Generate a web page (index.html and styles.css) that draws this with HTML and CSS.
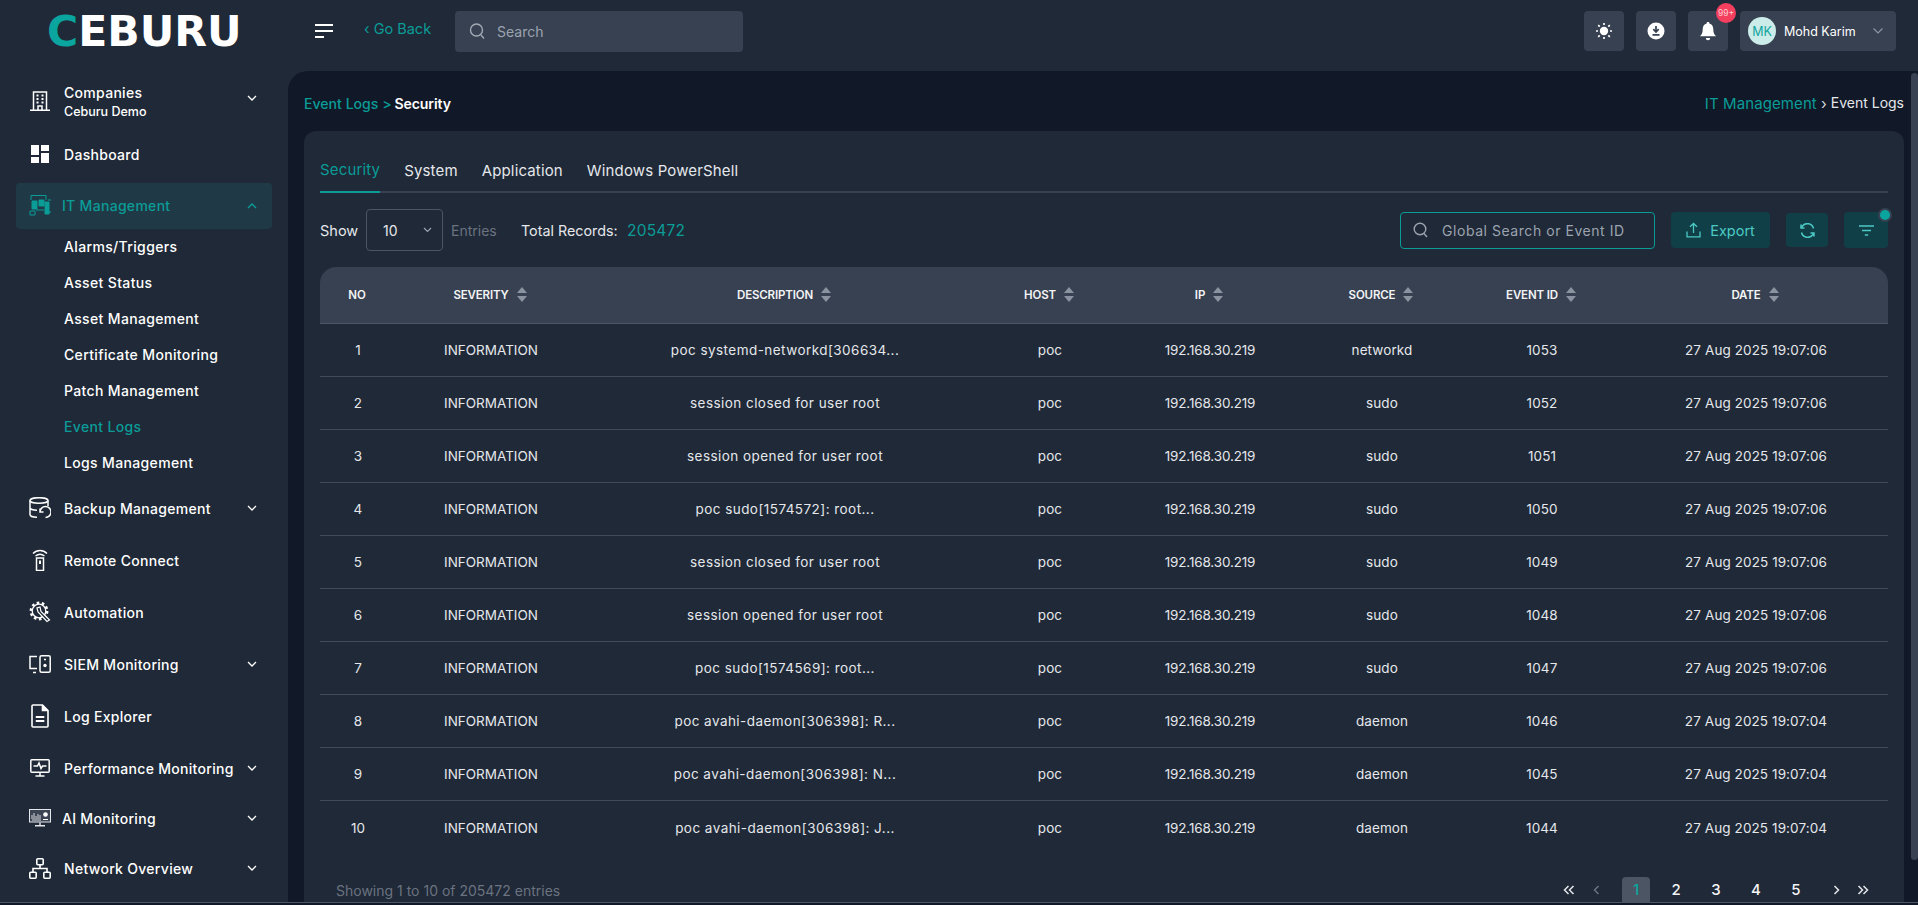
FILE: index.html
```html
<!DOCTYPE html>
<html lang="en">
<head>
<meta charset="utf-8">
<title>Event Logs - Security</title>
<link rel="stylesheet" href="styles.css">
</head>
<body>
<div class="app">
  <header class="topbar">
    <div class="brand"><span class="logo"><span class="logo-c">C</span>EBURU</span></div>
    <button class="burger" aria-label="Menu"><svg width="18" height="14" viewBox="0 0 18 14"><path d="M0 1h18M0 7h18M0 13h9" stroke="#fff" stroke-width="2"/></svg></button>
    <a class="goback">‹ Go Back</a>
    <div class="topsearch">
      <svg width="16" height="18" viewBox="0 0 16 18" fill="none" stroke="#a3aab5" stroke-width="1.4"><circle cx="7.5" cy="8" r="6"/><path d="M12 13l3 3.5"/></svg>
      <span>Search</span>
    </div>
    <div class="top-actions">
      <div class="tbtn"><svg width="16" height="16" viewBox="0 0 16 16"><circle cx="8" cy="8" r="4.2" fill="#fff"/><path d="M8 0v2M8 14v2M0 8h2M14 8h2M2.2 2.2l1.5 1.5M12.3 12.3l1.5 1.5M2.2 13.8l1.5-1.5M12.3 3.7l1.5-1.5" stroke="#fff" stroke-width="1.7"/></svg></div>
      <div class="tbtn"><svg width="18" height="18" viewBox="0 0 18 18"><circle cx="9" cy="9" r="8.5" fill="#fff"/><path d="M9 4v5M6.3 7.2L9 10l2.7-2.8M5.5 12.8h7" stroke="#374151" stroke-width="1.7" fill="none"/></svg></div>
      <div class="tbtn tbtn-bell"><svg width="16" height="19" viewBox="0 0 16 19"><path d="M8 0a1.3 1.3 0 011.3 1.6C12 2.3 13.3 4.6 13.3 7.3c0 3.6.7 5 2.7 7H0c2-2 2.7-3.4 2.7-7 0-2.7 1.3-5 4-5.7A1.3 1.3 0 018 0z" fill="#fff"/><path d="M5.8 16h4.4a2.2 2.2 0 01-4.4 0z" fill="#fff"/></svg><span class="badge">99+</span></div>
      <div class="user">
        <span class="avatar">MK</span>
        <span class="uname">Mohd Karim</span>
        <svg width="12" height="8" viewBox="0 0 12 8" fill="none" stroke="#8d95a3" stroke-width="1.2"><path d="M1.5 1.5L6 6l4.5-4.5"/></svg>
      </div>
    </div>
  </header>
  <div class="body">
    <nav class="sidebar">
      <a class="nav-row nav-company">
        <span class="ico"><svg width="20" height="20" viewBox="0 0 20 20" fill="none" stroke="#fff" stroke-width="1.5"><path d="M3.5 19.2V1h13v18.2M0 19.2h20M8 19v-4h4v4"/><path d="M6.5 4.500h2M11.500 4.500h2M6.500 8h2M11.500 8h2M6.500 11.500h2M11.500 11.500h2" stroke-width="2"/></svg></span>
        <span class="nav-text"><span class="nav-label">Companies</span><span class="nav-sub">Ceburu Demo</span></span>
        <svg class="chev" width="10" height="7" viewBox="0 0 10 7" fill="none" stroke="#fff" stroke-width="1.3"><path d="M1 1l4 4 4-4"/></svg>
      </a>
      <a class="nav-row">
        <span class="ico"><svg width="18" height="18" viewBox="0 0 18 18" fill="#fff"><path d="M0 0h8v10H0zM10 0h8v6h-8zM10 8h8v10h-8zM0 12h8v6H0z"/></svg></span>
        <span class="nav-label">Dashboard</span>
      </a>
      <a class="nav-row nav-active">
        <span class="ico"><svg width="22" height="22" viewBox="0 0 22 22" fill="none" stroke="#0b9c97" stroke-width="1"><path d="M2 6V1.5h15V6M19 6h3M19 18h3"/><path d="M3 7h5v8H3zM10 6h5v6h-5z" fill="#0b9c97"/><path d="M16 8h4v12h-4z" fill="#0b9c97"/><path d="M1 17h5v4H1zM7 16h8"/></svg></span>
        <span class="nav-label">IT Management</span>
        <svg class="chev" width="10" height="7" viewBox="0 0 10 7" fill="none" stroke="#0b9c97" stroke-width="1.3"><path d="M1 6l4-4 4 4"/></svg>
      </a>
      <ul class="subnav">
        <li>Alarms/Triggers</li>
        <li>Asset Status</li>
        <li>Asset Management</li>
        <li>Certificate Monitoring</li>
        <li>Patch Management</li>
        <li class="sub-active">Event Logs</li>
        <li>Logs Management</li>
      </ul>
      <a class="nav-row nav-backup">
        <span class="ico"><svg width="22" height="22" viewBox="0 0 22 22" fill="none" stroke="#fff" stroke-width="1.5"><ellipse cx="10" cy="3.5" rx="9" ry="2.8"/><path d="M1 3.5v14c0 1.5 3 2.8 7 2.8M19 3.5V9M1 10.5c0 1.500 3 2.800 7 2.800"/><path d="M11 15a5.5 5.5 0 115.5 5.5M11 11.5V15h3.500"/></svg></span>
        <span class="nav-label">Backup Management</span>
        <svg class="chev" width="10" height="7" viewBox="0 0 10 7" fill="none" stroke="#fff" stroke-width="1.3"><path d="M1 1l4 4 4-4"/></svg>
      </a>
      <a class="nav-row">
        <span class="ico"><svg width="16" height="22" viewBox="0 0 16 22" fill="none" stroke="#fff" stroke-width="1.4"><path d="M1 4.5C5 .5 11 .5 15 4.5M3.5 7c3-2.3 6-2.3 9 0"/><rect x="4.5" y="9" width="7" height="12.5" stroke-width="1.5"/><path d="M8 11.5v3.5" stroke-width="2"/></svg></span>
        <span class="nav-label">Remote Connect</span>
      </a>
      <a class="nav-row">
        <span class="ico"><svg width="22" height="22" viewBox="0 0 22 22" fill="none" stroke="#fff" stroke-width="1.5"><circle cx="10" cy="10" r="6.8" stroke-width="1.3"/><circle cx="10" cy="10" r="8.2" stroke-width="2.5" stroke-dasharray="2.6 2.55"/><path d="M8 7l1 4 9 9.5 2.5-1.5L12 10.5 11 6z" fill="#1f2937" stroke-width="1.2"/></svg></span>
        <span class="nav-label">Automation</span>
      </a>
      <a class="nav-row">
        <span class="ico"><svg width="22" height="19" viewBox="0 0 22 19" fill="none" stroke="#fff" stroke-width="1.5"><path d="M8 1.5H1v12h7M4 17.5h3"/><rect x="11" y=".8" width="10.2" height="16.5" rx="1.5"/><circle cx="16" cy="10.5" r="1.7" fill="#fff" stroke="none"/><path d="M15 4.5h2" stroke-width="1.6"/></svg></span>
        <span class="nav-label">SIEM Monitoring</span>
        <svg class="chev" width="10" height="7" viewBox="0 0 10 7" fill="none" stroke="#fff" stroke-width="1.3"><path d="M1 1l4 4 4-4"/></svg>
      </a>
      <a class="nav-row">
        <span class="ico"><svg width="18" height="24" viewBox="0 0 18 24" fill="none" stroke="#fff" stroke-width="1.6"><path d="M11.5 1H2a1 1 0 00-1 1v20a1 1 0 001 1h14a1 1 0 001-1V6.5z"/><path d="M11.5 1v5.5H17" fill="#fff"/><path d="M4.8 13h8.5M4.8 17h8.5" stroke-width="1.8"/></svg></span>
        <span class="nav-label">Log Explorer</span>
      </a>
      <a class="nav-row">
        <span class="ico"><svg width="20" height="18" viewBox="0 0 20 18" fill="none" stroke="#fff" stroke-width="1.5"><rect x=".8" y=".8" width="18.4" height="12.4" rx="1"/><path d="M3.5 7h4l1.5-3 2 5.5 1.5-2.5h4M10 13.5v3M5.5 17h9"/></svg></span>
        <span class="nav-label">Performance Monitoring</span>
        <svg class="chev" width="10" height="7" viewBox="0 0 10 7" fill="none" stroke="#fff" stroke-width="1.3"><path d="M1 1l4 4 4-4"/></svg>
      </a>
      <a class="nav-row nav-ai">
        <span class="ico"><svg width="22" height="18" viewBox="0 0 22 18" fill="none" stroke="#e5e7eb" stroke-width="1"><rect x=".5" y=".5" width="21" height="12.5" fill="#3b4454"/><path d="M3 10V6M5 10V4M7 10V7M9 10V5M11 10V6M3 11h9" stroke="#fff" stroke-width=".8"/><circle cx="16.5" cy="5.5" r="2.3" fill="#fff" stroke="none"/><path d="M14 10.5h5" stroke="#fff"/><path d="M11 13.5V16M6 16.8h10" stroke-width="1.4"/></svg></span>
        <span class="nav-label">AI Monitoring</span>
        <svg class="chev" width="10" height="7" viewBox="0 0 10 7" fill="none" stroke="#fff" stroke-width="1.3"><path d="M1 1l4 4 4-4"/></svg>
      </a>
      <a class="nav-row">
        <span class="ico"><svg width="22" height="21" viewBox="0 0 22 21" fill="none" stroke="#fff" stroke-width="1.6"><rect x="7.8" y=".8" width="6.4" height="6" rx="1"/><rect x=".8" y="14.2" width="6.4" height="6" rx="1"/><rect x="14.8" y="14.2" width="6.4" height="6" rx="1"/><path d="M11 7v3.5M4 14v-3.5h14V14"/></svg></span>
        <span class="nav-label">Network Overview</span>
        <svg class="chev" width="10" height="7" viewBox="0 0 10 7" fill="none" stroke="#fff" stroke-width="1.3"><path d="M1 1l4 4 4-4"/></svg>
      </a>
    </nav>
    <main class="main">
      <div class="content">
        <div class="crumbs">
          <div class="crumb-left"><span class="teal">Event Logs &gt;</span> <b>Security</b></div>
          <div class="crumb-right"><span class="teal">IT Management</span><span class="crumb-sep">›</span><span class="crumb-cur">Event Logs</span></div>
        </div>
        <section class="card">
          <div class="tabs">
            <a class="tab tab-active">Security</a>
            <a class="tab">System</a>
            <a class="tab">Application</a>
            <a class="tab">Windows PowerShell</a>
          </div>
          <div class="toolbar">
            <span class="show">Show</span>
            <div class="select"><span>10</span><svg width="9" height="6" viewBox="0 0 9 6" fill="none" stroke="#9ca3af" stroke-width="1.2"><path d="M1 1l3.5 3.5L8 1"/></svg></div>
            <span class="entries">Entries</span>
            <span class="total">Total Records:</span>
            <span class="total-num">205472</span>
            <div class="tools">
              <div class="gsearch">
                <svg width="15" height="16" viewBox="0 0 15 16" fill="none" stroke="#9ca3af" stroke-width="1.4"><circle cx="7" cy="7" r="5.8"/><path d="M11 11.5l3 3.5"/></svg>
                <span>Global Search or Event ID</span>
              </div>
              <div class="tool tool-export"><svg width="15" height="16" viewBox="0 0 15 16" fill="none" stroke="#4cc9c4" stroke-width="1.3"><path d="M7.5 11V1.5M4 4.8l3.5-3.3L11 4.8M1 9.5v5.3h13V9.5"/></svg><span>Export</span></div>
              <div class="tool tool-refresh"><svg width="15" height="15" viewBox="0 0 15 15" fill="none" stroke="#4cc9c4" stroke-width="1.5"><path d="M13.5 5.5A6.3 6.3 0 002.5 3L1 5M1.5 9.5A6.3 6.3 0 0012.5 12l1.5-2M1 1.5V5h3.5M14 13.5V10h-3.5"/></svg></div>
              <div class="tool tool-filter"><svg width="15" height="11" viewBox="0 0 15 11" fill="none" stroke="#4cc9c4" stroke-width="1.4"><path d="M0 1h15M3 5.5h9M5.8 10h3.4"/></svg><span class="dot"></span></div>
            </div>
          </div>
          <table class="grid">
            <colgroup>
              <col class="c-no"><col class="c-sev"><col class="c-desc"><col class="c-host"><col class="c-ip"><col class="c-src"><col class="c-id"><col class="c-date">
            </colgroup>
            <thead>
              <tr>
                <th>NO</th>
                <th>SEVERITY<span class="sort"></span></th>
                <th>DESCRIPTION<span class="sort"></span></th>
                <th>HOST<span class="sort"></span></th>
                <th>IP<span class="sort"></span></th>
                <th>SOURCE<span class="sort"></span></th>
                <th>EVENT ID<span class="sort"></span></th>
                <th>DATE<span class="sort"></span></th>
              </tr>
            </thead>
            <tbody>
              <tr><td>1</td><td class="sev">INFORMATION</td><td class="desc">poc systemd-networkd[306634...</td><td>poc</td><td class="ip">192.168.30.219</td><td>networkd</td><td>1053</td><td>27 Aug 2025 19:07:06</td></tr>
              <tr><td>2</td><td class="sev">INFORMATION</td><td class="desc">session closed for user root</td><td>poc</td><td class="ip">192.168.30.219</td><td>sudo</td><td>1052</td><td>27 Aug 2025 19:07:06</td></tr>
              <tr><td>3</td><td class="sev">INFORMATION</td><td class="desc">session opened for user root</td><td>poc</td><td class="ip">192.168.30.219</td><td>sudo</td><td>1051</td><td>27 Aug 2025 19:07:06</td></tr>
              <tr><td>4</td><td class="sev">INFORMATION</td><td class="desc">poc sudo[1574572]: root...</td><td>poc</td><td class="ip">192.168.30.219</td><td>sudo</td><td>1050</td><td>27 Aug 2025 19:07:06</td></tr>
              <tr><td>5</td><td class="sev">INFORMATION</td><td class="desc">session closed for user root</td><td>poc</td><td class="ip">192.168.30.219</td><td>sudo</td><td>1049</td><td>27 Aug 2025 19:07:06</td></tr>
              <tr><td>6</td><td class="sev">INFORMATION</td><td class="desc">session opened for user root</td><td>poc</td><td class="ip">192.168.30.219</td><td>sudo</td><td>1048</td><td>27 Aug 2025 19:07:06</td></tr>
              <tr><td>7</td><td class="sev">INFORMATION</td><td class="desc">poc sudo[1574569]: root...</td><td>poc</td><td class="ip">192.168.30.219</td><td>sudo</td><td>1047</td><td>27 Aug 2025 19:07:06</td></tr>
              <tr><td>8</td><td class="sev">INFORMATION</td><td class="desc">poc avahi-daemon[306398]: R...</td><td>poc</td><td class="ip">192.168.30.219</td><td>daemon</td><td>1046</td><td>27 Aug 2025 19:07:04</td></tr>
              <tr><td>9</td><td class="sev">INFORMATION</td><td class="desc">poc avahi-daemon[306398]: N...</td><td>poc</td><td class="ip">192.168.30.219</td><td>daemon</td><td>1045</td><td>27 Aug 2025 19:07:04</td></tr>
              <tr><td>10</td><td class="sev">INFORMATION</td><td class="desc">poc avahi-daemon[306398]: J...</td><td>poc</td><td class="ip">192.168.30.219</td><td>daemon</td><td>1044</td><td>27 Aug 2025 19:07:04</td></tr>
            </tbody>
          </table>
          <div class="tfoot">
            <span class="showing">Showing 1 to 10 of 205472 entries</span>
            <div class="pager">
              <span class="pg pg-icon"><svg width="12" height="10" viewBox="0 0 12 10" fill="none" stroke="#e5e7eb" stroke-width="1.5"><path d="M5.5 1L1.5 5l4 4M10.5 1l-4 4 4 4"/></svg></span>
              <span class="pg pg-icon"><svg width="7" height="10" viewBox="0 0 7 10" fill="none" stroke="#6b7280" stroke-width="1.5"><path d="M5.5 1L1.5 5l4 4"/></svg></span>
              <span class="pg pg-cur">1</span><span class="pg">2</span><span class="pg">3</span><span class="pg">4</span><span class="pg">5</span>
              <span class="pg"><svg width="7" height="10" viewBox="0 0 7 10" fill="none" stroke="#e5e7eb" stroke-width="1.5"><path d="M1.5 1l4 4-4 4"/></svg></span>
              <span class="pg pg-last"><svg width="12" height="10" viewBox="0 0 12 10" fill="none" stroke="#e5e7eb" stroke-width="1.5"><path d="M1.5 1l4 4-4 4M6.5 1l4 4-4 4"/></svg></span>
            </div>
          </div>
        </section>
      </div>
      <div class="scroll"></div>
    </main>
  </div>
  <div class="strip"></div>
</div>
</body>
</html>
```

FILE: styles.css
```css
* { box-sizing: border-box; }
html, body { margin: 0; height: 905px; overflow: hidden; }
body { font-family: Inter, "Noto Sans", "Liberation Sans", sans-serif; font-size: 14px; color: #e5e7eb; background: #1f2937; }
a { color: inherit; text-decoration: none; }
.teal { color: #0b9c97; }

.app { height: 905px; display: flex; flex-direction: column; }
.topbar { height: 71px; flex: none; display: flex; align-items: center; background: #1f2937; padding: 0 22px 9px 0; }
.brand { width: 315px; flex: none; padding-left: 47px; }
.logo { font-family: "DejaVu Sans", sans-serif; font-weight: 700; font-size: 43px; line-height: 1; color: #fff; display: inline-block; transform: scaleX(.99); transform-origin: left center; }
.logo-c { color: #0ba5a0; }
.burger { background: none; border: 0; padding: 0; width: 18px; height: 14px; display: block; flex: none; }
.burger svg { display: block; }
.goback { margin-left: 31px; color: #0b9c97; font-size: 14.5px; width: 91px; flex: none; position: relative; top: -3px; white-space: nowrap; }
.topsearch { width: 288px; height: 41px; background: #374151; border-radius: 4px; display: flex; align-items: center; gap: 12px; padding-left: 14px; color: #9ca3af; font-size: 14px; }
.top-actions { margin-left: auto; display: flex; gap: 12px; }
.tbtn { width: 40px; height: 40px; background: #374151; border-radius: 4px; display: flex; align-items: center; justify-content: center; position: relative; }
.badge { position: absolute; top: -8px; right: -8px; width: 20px; height: 20px; border-radius: 50%; background: #f43f5e; color: #fecdd3; font-size: 8.5px; display: flex; align-items: center; justify-content: center; }
.user { width: 156px; height: 40px; background: #374151; border-radius: 4px; display: flex; align-items: center; padding-left: 8px; }
.avatar { width: 28px; height: 28px; border-radius: 50%; background: #cbece8; color: #12a5a0; font-size: 12.5px; display: flex; align-items: center; justify-content: center; flex: none; }
.uname { margin-left: 8px; width: 88px; color: #fff; font-size: 12.5px; font-weight: 400; white-space: nowrap; }

.body { flex: 1; display: flex; min-height: 0; }
.sidebar { width: 288px; flex: none; padding: 4px 16px 0; background: #1f2937; }
.nav-row { height: 52px; display: flex; align-items: center; padding: 0 0 2px 12px; color: #fff; font-weight: 500; font-size: 14px; letter-spacing: .3px; position: relative; }
.ico { width: 24px; height: 24px; margin-right: 12px; flex: none; display: flex; align-items: center; justify-content: center; }
.chev { position: absolute; left: 231px; top: 50%; margin-top: -4px; }
.nav-company { height: 54px; }
.nav-text { display: flex; flex-direction: column; gap: 3px; }
.nav-sub { font-size: 12.5px; letter-spacing: 0; }
.nav-company .chev { margin-top: -7px; }
.nav-active { height: 46px; margin-top: 2px; background: #1f3a46; border-radius: 4px; color: #0b9c97; }
.nav-active .ico, .nav-ai .ico { margin-right: 10px; }
.subnav { list-style: none; margin: 0; padding: 0 0 0 48px; }
.subnav li { height: 36px; display: flex; align-items: center; padding-bottom: 2px; color: #fff; font-weight: 500; font-size: 14px; letter-spacing: .35px; }
.subnav .sub-active { color: #0b9c97; }
.nav-backup { margin-top: 2px; }
.nav-ai { height: 48px; }

.main { flex: 1; min-width: 0; display: flex; gap: 7px; background: #111827; border-top-left-radius: 20px; padding-left: 16px; overflow: hidden; }
.content { width: 1600px; flex: none; }
.crumbs { height: 60px; display: flex; justify-content: space-between; align-items: center; font-size: 14.1px; padding-top: 4px; }
.crumb-left { font-weight: 500; }
.crumb-left b { color: #fff; font-weight: 600; letter-spacing: -.1px; margin-left: -1px; }
.crumb-right { display: flex; gap: 4px; font-size: 15px; letter-spacing: .1px; }
.crumb-cur { font-size: 14px; letter-spacing: 0; line-height: 18px; }
.crumb-sep { color: #d1d5db; }
.scroll { width: 7px; height: 787px; margin-top: 2px; background: #374151; border-radius: 4px; flex: none; }

.card { background: #1f2937; border-radius: 12px 12px 0 0; padding: 16px 16px 0; height: 771px; overflow: hidden; }
.tabs { height: 46px; display: flex; gap: 24px; border-bottom: 2px solid #374151; }
.tab { height: 46px; display: flex; align-items: center; padding-top: 1px; font-size: 15px; color: #e5e7eb; white-space: nowrap; letter-spacing: .15px; }
.tab-active { color: #0b9c97; border-bottom: 2px solid #0b9c97; padding-bottom: 1px; }
.toolbar { height: 42px; margin-top: 16px; display: flex; align-items: center; }
.show { width: 46px; font-size: 14.5px; }
.select { width: 77px; height: 42px; border: 1px solid #4b5563; border-radius: 4px; display: flex; align-items: center; justify-content: space-between; padding: 0 10px 0 16px; font-size: 14px; }
.entries { margin-left: 8px; width: 70px; color: #6b7280; font-size: 14px; }
.total { width: 106px; font-size: 14.3px; font-weight: 400; white-space: nowrap; }
.total-num { color: #0b9c97; font-size: 15.5px; letter-spacing: .2px; }
.tools { margin-left: auto; display: flex; align-items: center; gap: 16px; }
.gsearch { width: 255px; height: 37px; border: 1px solid #0b9c97; border-radius: 4px; display: flex; align-items: center; gap: 14px; padding-left: 12px; color: #9ca3af; font-size: 14px; letter-spacing: .55px; white-space: nowrap; }
.tool { height: 36px; background: #113f47; border-radius: 4px; display: flex; align-items: center; justify-content: center; color: #4cc9c4; position: relative; }
.tool-export { width: 99px; gap: 9px; font-size: 14.5px; }
.tool-refresh { width: 42px; height: 34px; }
.tool-filter { width: 44px; }
.dot { position: absolute; right: -4px; top: -4px; width: 14px; height: 14px; border-radius: 50%; background: #0ba5a0; border: 2px solid #374151; }

.grid { width: 1568px; margin-top: 16px; border-collapse: separate; border-spacing: 0; table-layout: fixed; }
.c-no { width: 76px; } .c-sev { width: 190px; } .c-desc { width: 398px; } .c-host { width: 132px; }
.c-ip { width: 188px; } .c-src { width: 156px; } .c-id { width: 164px; } .c-date { width: 264px; }
.grid th { height: 57px; padding: 0 2px 1px 0; background: #374151; color: #f3f4f6; font-size: 11.5px; letter-spacing: -.15px; font-weight: 600; border-bottom: 1px solid #4b5563; text-align: center; white-space: nowrap; }
.grid th:first-child { border-top-left-radius: 16px; }
.grid th:last-child { border-top-right-radius: 16px; }
.grid td { height: 53px; padding: 0; text-align: center; font-size: 13.5px; letter-spacing: .1px; color: #e5e7eb; border-bottom: 1px solid #414a5a; white-space: nowrap; }
.grid td.desc { letter-spacing: .45px; }
.grid td.ip { letter-spacing: -.15px; }
.grid td.sev { letter-spacing: 0; }
.grid tbody tr:last-child td { border-bottom: 0; }
.sort { display: inline-block; width: 10px; height: 15px; margin-left: 8px; vertical-align: -3px; position: relative; }
.sort::before, .sort::after { content: ""; position: absolute; left: 0; width: 0; height: 0; border-left: 5px solid transparent; border-right: 5px solid transparent; }
.sort::before { top: 0; border-bottom: 6.5px solid #8b93a1; }
.sort::after { bottom: 0; border-top: 6.5px solid #8b93a1; }

.tfoot { height: 48px; display: flex; justify-content: space-between; align-items: flex-end; padding-left: 16px; }
.showing { color: #6b7280; font-size: 14px; line-height: 22px; }
.pager { display: flex; margin-right: 18px; height: 25px; align-items: center; }
.pg { width: 40px; height: 25px; display: flex; align-items: center; justify-content: center; color: #f3f4f6; font-size: 15px; font-weight: 500; }
.pg-icon { width: 27px; }
.pg-cur { width: 28px; margin: 0 6px 0 12.5px; background: #4b5563; color: #0ba5a0; border-radius: 4px 4px 0 0; }
.pg-last { width: 14px; }

.strip { height: 3px; flex: none; background: #111827; border-top: 1px solid #4b5563; }
```
